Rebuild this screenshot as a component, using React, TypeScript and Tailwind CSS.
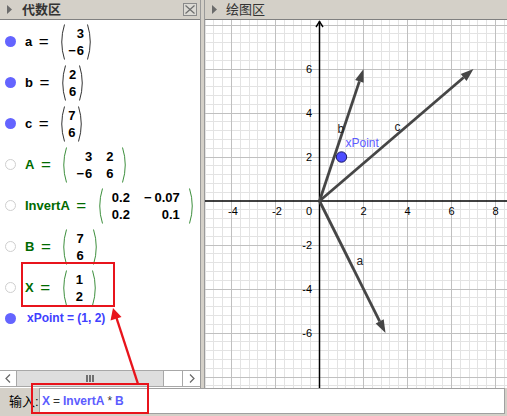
import React from "react";

type Row = {
  name: string;
  free: boolean;
  cols: string[][];
};

const rows: Row[] = [
  { name: "a", free: true, cols: [["3", "−6"]] },
  { name: "b", free: true, cols: [["2", "6"]] },
  { name: "c", free: true, cols: [["7", "6"]] },
  { name: "A", free: false, cols: [["3", "−6"], ["2", "6"]] },
  { name: "InvertA", free: false, cols: [["0.2", "0.2"], ["−0.07", "0.1"]] },
  { name: "B", free: false, cols: [["7", "6"]] },
  { name: "X", free: false, cols: [["1", "2"]] },
];

function Paren({ side, h, color }: { side: "l" | "r"; h: number; color: string }) {
  const d =
    side === "l"
      ? `M4.5 0.5 Q-1 ${h / 2} 4.5 ${h - 0.5}`
      : `M0.5 0.5 Q6 ${h / 2} 0.5 ${h - 0.5}`;
  return (
    <svg width="5" height={h} viewBox={`0 0 5 ${h}`} className="shrink-0">
      <path d={d} fill="none" stroke={color} strokeWidth="1" />
    </svg>
  );
}

function Num({ v, wide }: { v: string; wide: boolean }) {
  if (v.startsWith("−")) {
    return (
      <span>
        <span className={wide ? "mr-[3px]" : "mr-[1px]"}>−</span>
        {v.slice(1)}
      </span>
    );
  }
  return <span>{v}</span>;
}

function Matrix({ row }: { row: Row }) {
  const parenColor = row.free ? "#333333" : "#3d8f3d";
  const wide = row.cols.length > 1 && row.cols[1][0].includes(".");
  return (
    <div className="ml-[11px] flex items-center">
      <Paren side="l" h={36} color={parenColor} />
      <div className={row.free ? "flex gap-x-[14px] px-[3px]" : "flex gap-x-[14px] px-[9px]"}>
        {row.cols.map((col, i) => (
          <div key={i} className="flex flex-col items-end text-[13px] font-bold leading-[17px]">
            {col.map((v, j) => (
              <Num key={j} v={v} wide={wide} />
            ))}
          </div>
        ))}
      </div>
      <Paren side="r" h={36} color={parenColor} />
    </div>
  );
}

function Dot({ filled }: { filled: boolean }) {
  return filled ? (
    <span className="size-[11px] shrink-0 rounded-full bg-[#6464ff]" />
  ) : (
    <span className="size-[11px] shrink-0 rounded-full border-[1.5px] border-[#cfcfcf] bg-white" />
  );
}

function PanelHeader({ title, bold, close }: { title: string; bold?: boolean; close?: boolean }) {
  return (
    <div className="flex h-[20px] shrink-0 items-center border-b border-[#808080] bg-[#d4d0c8] pl-[7px]">
      <svg width="5" height="9" viewBox="0 0 5 9">
        <path d="M0 0 L5 4.5 L0 9Z" fill="#6b6b6b" />
      </svg>
      <span className={bold ? "ml-[10px] text-[13px] font-bold text-[#333]" : "ml-[9px] text-[13px] text-[#333]"}>
        {title}
      </span>
      {close && (
        <div className="ml-auto mr-[3px] flex h-[13px] w-[14px] items-center justify-center border border-[#8a8a8a] bg-[#dcdad4]">
          <svg width="10" height="9" viewBox="0 0 10 9">
            <path d="M0.5 0.5 L9.5 8.5 M9.5 0.5 L0.5 8.5" stroke="#6e6e6e" strokeWidth="1.2" />
          </svg>
        </div>
      )}
    </div>
  );
}

function ScrollBar() {
  return (
    <div className="mt-auto flex h-[17px] shrink-0 border-y border-[#a8a8a8] bg-white">
      <div className="flex w-[17px] items-center justify-center border-r border-[#a8a8a8]">
        <svg width="6" height="9" viewBox="0 0 6 9">
          <path d="M5 0.5 L1 4.5 L5 8.5" fill="none" stroke="#666" strokeWidth="1.2" />
        </svg>
      </div>
      <div className="flex w-[147px] items-center justify-center border-r border-[#a8a8a8] bg-[#dedede]">
        <svg width="8" height="7" viewBox="0 0 8 7">
          <path d="M1 0 V7 M4 0 V7 M7 0 V7" stroke="#555" strokeWidth="1.6" />
        </svg>
      </div>
      <div className="flex-1 border-r border-[#a8a8a8]" />
      <div className="flex w-[17px] items-center justify-center">
        <svg width="6" height="9" viewBox="0 0 6 9">
          <path d="M1 0.5 L5 4.5 L1 8.5" fill="none" stroke="#666" strokeWidth="1.2" />
        </svg>
      </div>
    </div>
  );
}

function AlgebraView() {
  return (
    <div className="flex w-[201px] shrink-0 flex-col overflow-hidden border-r border-[#9a9a9a] bg-white">
      <PanelHeader title="代数区" bold close />
      <div className="pt-[1px]">
        {rows.map((r) => (
          <div key={r.name} className="flex h-[41px] items-center pl-[5px]">
            <Dot filled={r.free} />
            <span className={r.free ? "ml-[9px] text-[13px] font-bold text-black" : "ml-[9px] text-[13px] font-bold text-[#006a00]"}>
              {r.name}
            </span>
            <span className={r.free ? "ml-[6px] w-[11px] text-center text-[17px] leading-none text-black" : "ml-[6px] w-[11px] text-center text-[17px] leading-none text-[#006a00]"}>
              =
            </span>
            <Matrix row={r} />
          </div>
        ))}
        <div className="flex h-[20px] items-center pl-[5px]">
          <Dot filled />
          <span className="ml-[11px] text-[12px] font-bold text-[#4040ff]">xPoint = (1, 2)</span>
        </div>
      </div>
      <div className="mb-[1px] mt-auto">
        <ScrollBar />
      </div>
    </div>
  );
}

function GraphicsView() {
  const OX = 319.5;
  const OY = 201;
  const U = 22;
  const S = 8.8;
  const minor: React.ReactElement[] = [];
  const major: React.ReactElement[] = [];
  for (let i = -14; i <= 22; i++) {
    const x = Math.floor(OX + i * S) + 0.5;
    if (x < 205 || x > 507 || i === 0) continue;
    const el = <line key={"v" + i} x1={x} y1={20} x2={x} y2={388} />;
    (i % 5 === 0 ? major : minor).push(el);
  }
  for (let j = -21; j <= 22; j++) {
    const y = Math.floor(OY + j * S) + 0.5;
    if (y < 20 || y > 388 || j === 0) continue;
    const el = <line key={"h" + j} x1={205} y1={y} x2={507} y2={y} />;
    (j % 5 === 0 ? major : minor).push(el);
  }

  const vec = (vx: number, vy: number, key: string) => {
    const tx = OX + vx * U;
    const ty = OY - vy * U;
    const dx = tx - OX;
    const dy = ty - OY;
    const len = Math.hypot(dx, dy);
    const ux = dx / len;
    const uy = dy / len;
    const bx = tx - ux * 13;
    const by = ty - uy * 13;
    const nx = -uy * 4.5;
    const ny = ux * 4.5;
    return (
      <g key={key}>
        <line x1={OX} y1={OY} x2={bx} y2={by} stroke="#464646" strokeWidth="2.8" />
        <polygon points={`${tx},${ty} ${bx + nx},${by + ny} ${bx - nx},${by - ny}`} fill="#464646" />
      </g>
    );
  };

  const xLabels = [-4, -2, 2, 4, 6, 8];
  const yLabels = [6, 4, 2, -2, -4, -6];

  return (
    <div className="flex min-w-0 flex-1 flex-col border-l border-[#9a9a9a] bg-white">
      <PanelHeader title="绘图区" />
      <svg className="block flex-1" width="302" height="368" viewBox="205 20 302 368">
        <g stroke="#e3e3e3" strokeWidth="1">{minor}</g>
        <g stroke="#c0c0c0" strokeWidth="1">{major}</g>
        <line x1={205} y1={OY} x2={507} y2={OY} stroke="#000" strokeWidth="1.5" />
        <line x1={OX} y1={21} x2={OX} y2={388} stroke="#000" strokeWidth="1.5" />
        <polyline points={`${OX - 3.5},27 ${OX},21.5 ${OX + 3.5},27`} fill="none" stroke="#000" strokeWidth="1.4" />
        <g fill="#000" fontSize="11" fontFamily="Liberation Sans, sans-serif">
          {xLabels.map((v) => (
            <text key={"xl" + v} x={OX + v * U + (v < 0 ? 1.5 : 0)} y={215} textAnchor="middle">
              {v}
            </text>
          ))}
          <text x={312} y={215} textAnchor="end">
            0
          </text>
          {yLabels.map((v) => (
            <text key={"yl" + v} x={312} y={OY - v * U + 4} textAnchor="end">
              {v}
            </text>
          ))}
        </g>
        {vec(3, -6, "a")}
        {vec(2, 6, "b")}
        {vec(7, 6, "c")}
        <g fontSize="12" fontFamily="Liberation Sans, sans-serif" fill="#222">
          <text x={337.5} y={133}>b</text>
          <text x={394.5} y={131}>c</text>
          <text x={356.5} y={265}>a</text>
        </g>
        <circle cx={OX + U} cy={OY - 2 * U} r={5.2} fill="#4d4dff" stroke="#1a1a66" strokeWidth="1" />
        <text x={345.5} y={147} fontSize="12" fontFamily="Liberation Sans, sans-serif" fill="#5c5cff">
          xPoint
        </text>
      </svg>
    </div>
  );
}

function InputBar() {
  return (
    <div className="flex h-[28px] items-start bg-[#d4d0c8]">
      <span className="ml-[9px] mt-[4px] w-[30px] text-[13px] text-black">输入:</span>
      <div className="mr-[2px] flex h-[26px] flex-1 items-center border border-[#a0a0a0] bg-white pl-[2px] text-[12px]">
        <span className="font-bold text-[#5c5cff]">X</span>
        <span className="ml-[3px] text-[#333]">=</span>
        <span className="ml-[3px] font-bold text-[#5c5cff]">InvertA</span>
        <span className="ml-[3px] text-[#333]">*</span>
        <span className="ml-[3px] font-bold text-[#5c5cff]">B</span>
      </div>
    </div>
  );
}

function Annotations() {
  return (
    <svg className="pointer-events-none absolute left-0 top-0" width="507" height="416" viewBox="0 0 507 416">
      <g fill="none" stroke="#e8141c" strokeWidth="2">
        <rect x="22" y="263" width="92" height="43" />
        <rect x="32" y="384" width="116" height="29" />
        <line x1="138" y1="384" x2="116.5" y2="318" strokeWidth="2.4" />
      </g>
      <polygon points="113,308 110.5,320.5 121.5,317" fill="#e8141c" />
    </svg>
  );
}

export default function App() {
  return (
    <div className="relative h-[416px] w-[507px] overflow-hidden bg-[#d4d0c8] font-[family-name:'Liberation_Sans','Noto_Sans_CJK_SC',sans-serif]">
      <div className="flex h-[388px]">
        <AlgebraView />
        <div className="w-[3px] shrink-0" />
        <GraphicsView />
      </div>
      <InputBar />
      <Annotations />
    </div>
  );
}
